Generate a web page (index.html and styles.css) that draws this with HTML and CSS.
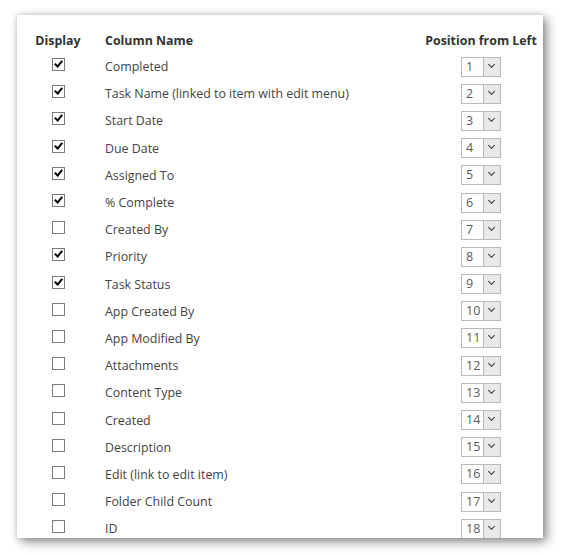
FILE: index.html
```html
<!DOCTYPE html>
<html>
<head>
<meta charset="utf-8">
<link rel="stylesheet" href="styles.css">
</head>
<body>
<div class="panel">
  <div class="grid">
    <div class="hd c1">Display</div>
    <div class="hd c2">Column Name</div>
    <div class="hd c3">Position from Left</div>

    <div class="c1"><span class="cb on"></span></div><div class="c2">Completed</div><div class="c3"><span class="sel"><span class="num">1</span><span class="arr"></span></span></div>
    <div class="c1"><span class="cb on"></span></div><div class="c2">Task Name (linked to item with edit menu)</div><div class="c3"><span class="sel"><span class="num">2</span><span class="arr"></span></span></div>
    <div class="c1"><span class="cb on"></span></div><div class="c2">Start Date</div><div class="c3"><span class="sel"><span class="num">3</span><span class="arr"></span></span></div>
    <div class="c1"><span class="cb on"></span></div><div class="c2">Due Date</div><div class="c3"><span class="sel"><span class="num">4</span><span class="arr"></span></span></div>
    <div class="c1"><span class="cb on"></span></div><div class="c2">Assigned To</div><div class="c3"><span class="sel"><span class="num">5</span><span class="arr"></span></span></div>
    <div class="c1"><span class="cb on"></span></div><div class="c2">% Complete</div><div class="c3"><span class="sel"><span class="num">6</span><span class="arr"></span></span></div>
    <div class="c1"><span class="cb"></span></div><div class="c2">Created By</div><div class="c3"><span class="sel"><span class="num">7</span><span class="arr"></span></span></div>
    <div class="c1"><span class="cb on"></span></div><div class="c2">Priority</div><div class="c3"><span class="sel"><span class="num">8</span><span class="arr"></span></span></div>
    <div class="c1"><span class="cb on"></span></div><div class="c2">Task Status</div><div class="c3"><span class="sel"><span class="num">9</span><span class="arr"></span></span></div>
    <div class="c1"><span class="cb"></span></div><div class="c2">App Created By</div><div class="c3"><span class="sel"><span class="num">10</span><span class="arr"></span></span></div>
    <div class="c1"><span class="cb"></span></div><div class="c2">App Modified By</div><div class="c3"><span class="sel"><span class="num">11</span><span class="arr"></span></span></div>
    <div class="c1"><span class="cb"></span></div><div class="c2">Attachments</div><div class="c3"><span class="sel"><span class="num">12</span><span class="arr"></span></span></div>
    <div class="c1"><span class="cb"></span></div><div class="c2">Content Type</div><div class="c3"><span class="sel"><span class="num">13</span><span class="arr"></span></span></div>
    <div class="c1"><span class="cb"></span></div><div class="c2">Created</div><div class="c3"><span class="sel"><span class="num">14</span><span class="arr"></span></span></div>
    <div class="c1"><span class="cb"></span></div><div class="c2">Description</div><div class="c3"><span class="sel"><span class="num">15</span><span class="arr"></span></span></div>
    <div class="c1"><span class="cb"></span></div><div class="c2">Edit (link to edit item)</div><div class="c3"><span class="sel"><span class="num">16</span><span class="arr"></span></span></div>
    <div class="c1"><span class="cb"></span></div><div class="c2">Folder Child Count</div><div class="c3"><span class="sel"><span class="num">17</span><span class="arr"></span></span></div>
    <div class="c1"><span class="cb"></span></div><div class="c2">ID</div><div class="c3"><span class="sel"><span class="num">18</span><span class="arr"></span></span></div>
  </div>
</div>
</body>
</html>
```
FILE: styles.css
```css
html, body {
  margin: 0;
  padding: 0;
  background: #ffffff;
}
body {
  font-family: "Open Sans", "Noto Sans", sans-serif;
  font-size: 12.4px;
  color: #444444;
  padding: 15px 0 0 17px;
  width: 561px;
  height: 555px;
  box-sizing: border-box;
  overflow: hidden;
}
.panel {
  width: 526px;
  height: 523px;
  background: #ffffff;
  overflow: hidden;
  box-shadow: 4px 4px 10px rgba(0, 0, 0, 0.42), 0 0 6px rgba(0, 0, 0, 0.18);
  padding: 13px 6px 0 18px;
  box-sizing: border-box;
}
.grid {
  display: grid;
  grid-template-columns: 46px 1fr 112px;
  grid-template-rows: 25px;
  grid-auto-rows: 27.2px;
  column-gap: 24px;
  align-items: center;
}
.hd {
  font-weight: 700;
  color: #333333;
  white-space: nowrap;
}
.c1 {
  display: flex;
  justify-content: center;
}
.c2 {
  white-space: nowrap;
}
.c3 {
  display: flex;
  justify-content: center;
}
.cb {
  display: block;
  width: 11px;
  height: 11px;
  border: 1px solid #7a7a7a;
  background: #ffffff;
  position: relative;
  top: -2px;
}
.cb.on::after {
  content: "";
  position: absolute;
  left: 3px;
  top: 0px;
  width: 3px;
  height: 6px;
  border: solid #000000;
  border-width: 0 2px 2px 0;
  transform: rotate(40deg);
}
.sel {
  display: flex;
  width: 40px;
  height: 20px;
  border: 1px solid #b9b9b9;
  box-sizing: border-box;
  background: #ffffff;
}
.num {
  flex: 1;
  padding-left: 4px;
  line-height: 18px;
  font-size: 12.5px;
  color: #5a5a5a;
}
.arr {
  width: 16px;
  border-left: 1px solid #b9b9b9;
  background: #e9e9e9;
  position: relative;
}
.arr::after {
  content: "";
  position: absolute;
  left: 4.5px;
  top: 4px;
  width: 4px;
  height: 4px;
  border: solid #3a3a3a;
  border-width: 0 1.6px 1.6px 0;
  transform: rotate(45deg);
}
```
